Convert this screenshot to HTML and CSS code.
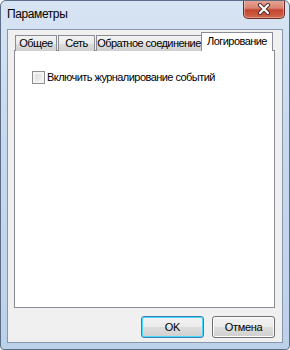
FILE: index.html
```html
<!DOCTYPE html>
<html lang="ru">
<head>
  <meta charset="UTF-8" />
  <title>Параметры</title>
  <link rel="stylesheet" href="styles.css">
</head>
<body>
  <div class="window">
    <div class="titlebar">
      <span class="title">Параметры</span>
      <button class="close">
        <svg width="14" height="12" viewBox="0 0 14 12">
          <path d="M3 2 L11 10 M11 2 L3 10" stroke="#4a2b2b" stroke-width="4" stroke-linecap="round" fill="none"/>
          <path d="M3 2 L11 10 M11 2 L3 10" stroke="#ffffff" stroke-width="2.2" stroke-linecap="round" fill="none"/>
        </svg>
      </button>
    </div>
    <div class="client">
      <div class="tabs">
        <div class="tab t-general">Общее</div>
        <div class="tab t-net">Сеть</div>
        <div class="tab t-back">Обратное соединение</div>
        <div class="tab t-log selected">Логирование</div>
      </div>
      <div class="panel">
        <label class="check">
          <span class="box"></span>
          Включить журналирование событий
        </label>
      </div>
      <div class="buttons">
        <button class="btn default">OK</button>
        <button class="btn">Отмена</button>
      </div>
    </div>
  </div>
</body>
</html>
```

FILE: styles.css
```css
* {
  box-sizing: border-box;
  margin: 0;
  padding: 0;
}
body {
  width: 290px;
  height: 350px;
  font-family: "Liberation Sans", Arial, sans-serif;
  font-size: 11px;
  letter-spacing: -0.55px;
  color: #000;
  background: #fff;
}
.window {
  width: 290px;
  height: 350px;
  border: 1px solid #5b6e86;
  border-radius: 6px 6px 4px 4px;
  background: linear-gradient(180deg, #d7e4f3 0%, #c7d9ee 40%, #bcd1ea 100%);
  display: flex;
  flex-direction: column;
  overflow: hidden;
}
.titlebar {
  height: 28px;
  display: flex;
  justify-content: space-between;
  align-items: flex-start;
  padding-left: 6px;
  padding-right: 4px;
}
.title {
  margin-top: 6px;
  font-size: 12px;
  letter-spacing: -0.4px;
  color: #000;
}
.close {
  width: 42px;
  height: 19px;
  margin-top: -1px;
  border: 1px solid #6f2b25;
  border-top: none;
  border-radius: 0 0 5px 5px;
  background: linear-gradient(180deg, #e6a696 0%, #d98572 45%, #c4452f 55%, #d0664b 100%);
  display: flex;
  align-items: center;
  justify-content: center;
  box-shadow: inset 0 0 0 1px rgba(255, 255, 255, 0.35);
}
.client {
  margin: 0 6px 6px 6px;
  flex: 1;
  background: #f0f0f0;
  border: 1px solid #8797ab;
  padding: 2px 7px 0 6px;
  display: flex;
  flex-direction: column;
}
.tabs {
  display: flex;
  align-items: flex-end;
  height: 19px;
  padding-left: 1px;
  position: relative;
  z-index: 1;
}
.tab {
  height: 16px;
  margin-right: 1px;
  border: 1px solid #898c95;
  border-bottom: none;
  background: linear-gradient(180deg, #f2f2f2 0%, #ebebeb 50%, #dddddd 51%, #cfcfcf 100%);
  line-height: 15px;
  text-align: center;
  white-space: nowrap;
}
.t-general { width: 42px; }
.t-net { width: 37px; }
.t-back { width: 106px; }
.t-log { width: 68px; }
.tab.selected {
  width: 72px;
  height: 19px;
  margin: 0 -2px;
  background: #fff;
  line-height: 17px;
}
.panel {
  height: 258px;
  margin-top: -1px;
  border: 1px solid #898c95;
  background: #fff;
  padding: 19px 0 0 17px;
}
.check {
  display: flex;
  align-items: center;
  gap: 1px;
  line-height: 15px;
}
.box {
  width: 13px;
  height: 13px;
  border: 1px solid #8e8f8f;
  background: linear-gradient(135deg, #dcdcdc 0%, #f5f5f5 100%);
  box-shadow: inset 0 0 0 2px #f4f4f4;
  margin-right: 1px;
}
.buttons {
  display: flex;
  justify-content: flex-end;
  gap: 8px;
  margin-top: 8px;
}
.btn {
  width: 63px;
  height: 22px;
  font-family: "Liberation Sans", Arial, sans-serif;
  font-size: 11px;
  letter-spacing: -0.3px;
  color: #000;
  border: 1px solid #707070;
  border-radius: 3px;
  background: linear-gradient(180deg, #f2f2f2 0%, #ebebeb 50%, #dddddd 51%, #cfcfcf 100%);
  box-shadow: inset 0 0 0 1px #fcfcfc;
}
.btn.default {
  border-color: #3c7fb1;
  box-shadow: inset 0 0 0 1px #48d8fb;
}
```
